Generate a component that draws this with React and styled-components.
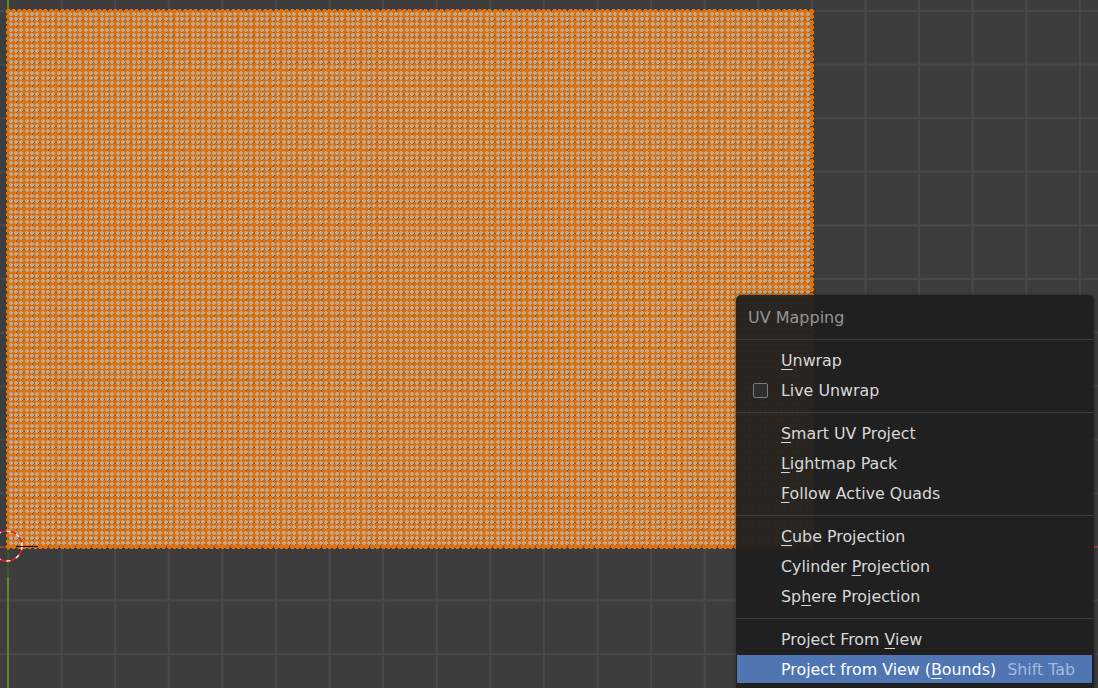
import React from 'react'
import styled, { createGlobalStyle } from 'styled-components'

const GlobalStyle = createGlobalStyle`
  html, body {
    margin: 0;
    padding: 0;
    background: #3d3d3d;
    overflow: hidden;
  }
`

const Viewport = styled.div`
  position: relative;
  width: 1098px;
  height: 688px;
  overflow: hidden;
  font-family: "DejaVu Sans", sans-serif;
  background-color: #3d3d3d;
  background-image:
    linear-gradient(to right, #494949 2px, transparent 2px),
    linear-gradient(to bottom, #494949 2px, transparent 2px);
  background-size: 53.6px 53.6px;
  background-position: 7px 10px;
`

const Overlay = styled.svg`
  position: absolute;
  left: 0;
  top: 0;
`

const Menu = styled.div`
  position: absolute;
  left: 736px;
  top: 295px;
  width: 358px;
  height: 400px;
  box-sizing: border-box;
  background: rgba(31, 31, 31, 0.94);
  border-radius: 5px 5px 0 0;
  box-shadow: 0 0 5px rgba(0, 0, 0, 0.35);
  display: flex;
  flex-direction: column;
`

const Title = styled.div`
  height: 44px;
  line-height: 46px;
  padding-left: 12px;
  font-size: 16px;
  color: #959595;
`

const Separator = styled.div`
  height: 1px;
  margin: 0 1px 6px 0;
  background: #3c3c3c;
`

const Group = styled.div`
  display: flex;
  flex-direction: column;
  & + ${Separator} {
    margin-top: 6px;
  }
`

const Row = styled.div`
  height: ${(p) => (p.$active ? 28 : 30)}px;
  box-sizing: border-box;
  margin: 0 2px 0 1px;
  padding: 0 17px ${(p) => (p.$active ? 0 : 2)}px 44px;
  display: flex;
  align-items: center;
  position: relative;
  font-size: 15.85px;
  white-space: pre;
  color: ${(p) => (p.$active ? '#ffffff' : '#d8d8d8')};
  background: ${(p) => (p.$active ? '#5075b3' : 'transparent')};
`

const Label = styled.span`
  flex: 1;
`

const Key = styled.span`
  text-decoration: underline;
  text-decoration-thickness: 1px;
  text-underline-offset: 3px;
`

const Shortcut = styled.span`
  color: #a4b9dc;
`

const Check = styled.span`
  position: absolute;
  left: 16px;
  top: 7px;
  width: 15px;
  height: 15px;
  box-sizing: border-box;
  border: 1px solid #7c7c7c;
  border-radius: 2px;
  background: #2e2e2e;
`

const STEP = 5.35

// lattice points snapped to whole pixels, the way the viewport draws its mesh
const latticePath = (cols, rows, offset, shape) => {
  let d = ''
  for (let r = 0; r < rows; r++) {
    for (let c = 0; c < cols; c++) {
      const x = Math.round(8 + (c + offset) * STEP)
      const y = Math.round(11 + (r + offset) * STEP)
      d += `M${x} ${y}${shape}`
    }
  }
  return d
}

const vertexPath = latticePath(151, 101, 0, 'm-1 -2h3v1h1v3h-1v1h-3v-1h-1v-3h1z')
const facePath = latticePath(150, 100, 0.5, 'm-1 -2h2v1h1v2h-1v1h-2v-1h-1v-2h1z')

const MeshDrawing = () => (
  <Overlay width="1098" height="688" viewBox="0 0 1098 688">
    <rect x="7" y="0" width="2" height="688" fill="#62852e" />
    <rect x="7" y="550" width="2" height="27" fill="#3f5a24" />
    <rect x="0" y="546" width="1098" height="2" fill="#9c3a4b" />
    <rect x="8" y="11" width="802" height="535" fill="#8a5a2a" />
    <path d={vertexPath} fill="#dd710f" shapeRendering="crispEdges" />
    <path d={facePath} fill="#bca98f" shapeRendering="crispEdges" />
    <circle cx="7" cy="546" r="15" fill="none" stroke="#e0202a" strokeWidth="1.5" />
    <circle cx="7" cy="546" r="15" fill="none" stroke="#ffffff" strokeWidth="1.5" strokeDasharray="4 6" />
    <rect x="16" y="546" width="22" height="1" fill="#000000" />
    <rect x="1" y="546" width="4" height="1" fill="#a03040" />
  </Overlay>
)

const App = () => (
  <>
    <GlobalStyle />
    <Viewport>
      <MeshDrawing />
      <Menu>
        <Title>UV Mapping</Title>
        <Separator />
        <Group>
          <Row><Label><Key>U</Key>nwrap</Label></Row>
          <Row><Check /><Label>Live Unwrap</Label></Row>
        </Group>
        <Separator />
        <Group>
          <Row><Label><Key>S</Key>mart UV Project</Label></Row>
          <Row><Label><Key>L</Key>ightmap Pack</Label></Row>
          <Row><Label><Key>F</Key>ollow Active Quads</Label></Row>
        </Group>
        <Separator />
        <Group>
          <Row><Label><Key>C</Key>ube Projection</Label></Row>
          <Row><Label>Cylinder <Key>P</Key>rojection</Label></Row>
          <Row><Label>Sp<Key>h</Key>ere Projection</Label></Row>
        </Group>
        <Separator />
        <Group>
          <Row><Label>Project From <Key>V</Key>iew</Label></Row>
          <Row $active><Label>Project from View (<Key>B</Key>ounds)</Label><Shortcut>Shift Tab</Shortcut></Row>
        </Group>
      </Menu>
    </Viewport>
  </>
)

export default App
